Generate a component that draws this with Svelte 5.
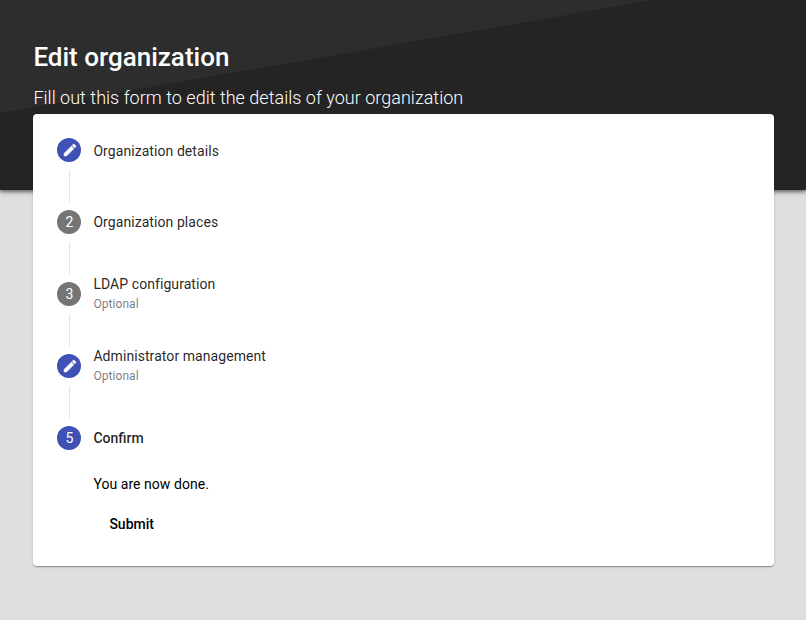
<script>
  const steps = [
    { label: 'Organization details', edited: true },
    { label: 'Organization places' },
    { label: 'LDAP configuration', optional: true },
    { label: 'Administrator management', optional: true, edited: true },
    { label: 'Confirm', active: true },
  ];
</script>

<div class="page">
  <header>
    <h1>Edit organization</h1>
    <p>Fill out this form to edit the details of your organization</p>
  </header>

  <main class="card">
    {#each steps as step, i}
      <section class="step">
        <div class="step-header" class:active={step.active}>
          <span class="badge" class:primary={step.edited || step.active}>
            {#if step.edited}
              <svg viewBox="0 0 24 24" width="16" height="16" aria-hidden="true">
                <path fill="currentColor" stroke="currentColor" stroke-width="0.7" d="M3 17.25V21h3.75L17.81 9.94l-3.75-3.75L3 17.25zM20.71 7.04a1 1 0 0 0 0-1.41l-2.34-2.34a1 1 0 0 0-1.41 0l-1.83 1.83 3.75 3.75 1.83-1.83z" />
              </svg>
            {:else}
              <span>{i + 1}</span>
            {/if}
          </span>
          <div class="label" class:with-optional={step.optional}>
            <div>{step.label}</div>
            {#if step.optional}<div class="optional">Optional</div>{/if}
          </div>
        </div>
      </section>
    {/each}
    <div class="content">
      <div class="message">You are now done.</div>
      <button type="button">Submit</button>
    </div>
  </main>
</div>

<style>
  :global(body) {
    margin: 0;
    background: #dedede;
  }
  .page {
    min-height: 620px;
    box-sizing: border-box;
    overflow: hidden;
    background: #dedede;
    font-family: Roboto, 'Liberation Sans', sans-serif;
    font-size: 14px;
  }
  header {
    height: 190px;
    box-sizing: border-box;
    padding: 41px 33px 0 33.4px;
    color: #fff;
    background: linear-gradient(170.17deg, #2d2d2d 110.9px, #242424 111.9px);
    box-shadow: 0 1px 6px 0 rgba(0, 0, 0, 0.4), 0 2px 3px 0 rgba(0, 0, 0, 0.3);
  }
  h1 {
    margin: 0;
    font-size: 26px;
    line-height: 32px;
    font-weight: 500;
  }
  header p {
    margin: 13px 0 0;
    font-size: 18px;
    line-height: 24px;
    font-weight: 300;
    letter-spacing: 0.015px;
  }
  .card {
    position: relative;
    margin: -76px 32px 0 33px;
    height: 452px;
    box-sizing: border-box;
    padding-top: 24px;
    border-radius: 4px;
    background: #fff;
    box-shadow: 0 2px 1px -1px rgba(0, 0, 0, 0.2), 0 1px 1px 0 rgba(0, 0, 0, 0.14), 0 1px 3px 0 rgba(0, 0, 0, 0.12);
  }
  .step {
    height: 72px;
    padding-left: 24px;
  }
  .step:not(:nth-child(5))::after {
    content: '';
    display: block;
    width: 1px;
    height: 32px;
    margin: 8px 0 0 12px;
    background: #e3e3e3;
  }
  .step-header {
    display: flex;
    align-items: center;
    height: 24px;
  }
  .badge {
    display: flex;
    align-items: center;
    justify-content: center;
    width: 24px;
    height: 24px;
    margin-right: 12.4px;
    border-radius: 50%;
    color: #fff;
    background: #757575;
  }
  .badge span {
    padding-left: 1px;
  }
  .badge.primary {
    background: #3f51b5;
  }
  .badge svg {
    display: block;
    margin-left: 1px;
  }
  .label {
    color: rgba(0, 0, 0, 0.87);
    line-height: 24px;
    letter-spacing: 0.07px;
  }
  .step:first-child .label {
    padding-top: 2px;
  }
  .label.with-optional {
    padding-bottom: 4px;
  }
  .optional {
    color: rgba(0, 0, 0, 0.54);
    font-size: 12px;
    line-height: 17px;
  }
  .active .label {
    font-weight: 500;
    letter-spacing: 0;
  }
  .content {
    padding-left: 60.4px;
    margin-top: -24px;
  }
  .message {
    line-height: 20px;
    letter-spacing: 0.05px;
  }
  button {
    display: block;
    margin: 12px 0 0;
    padding: 0 16px;
    height: 36px;
    border: 0;
    background: transparent;
    color: #000;
    font: 500 14px/36px Roboto, 'Liberation Sans', sans-serif;
  }
</style>
